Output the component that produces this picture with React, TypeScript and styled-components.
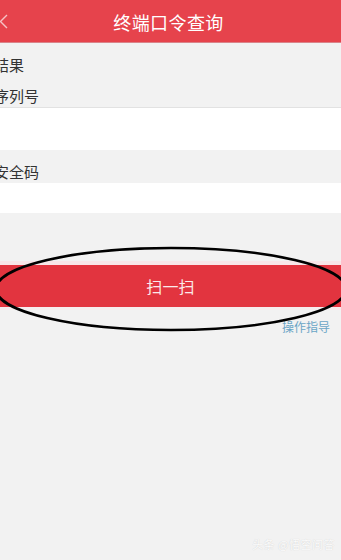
import React from "react";
import styled, { createGlobalStyle } from "styled-components";

const Global = createGlobalStyle`
  html, body { margin: 0; padding: 0; background: #f2f2f2; }
  body { font-family: "Noto Sans CJK SC", "Noto Sans", sans-serif; }
  * { box-sizing: border-box; }
`;

const Page = styled.div`
  position: relative;
  width: 341px;
  height: 560px;
  overflow: hidden;
  background: #f2f2f2;
`;

const Header = styled.div`
  height: 43px;
  background: #e6434c;
  display: flex;
  align-items: center;
  justify-content: center;
  position: relative;
  border-bottom: 1px solid #d9848a;
`;

const Title = styled.div`
  color: #fff;
  font-size: 18px;
  line-height: 20px;
  letter-spacing: 0.4px;
  margin-left: -4px;
  margin-top: 1px;
`;

const Back = styled.svg`
  position: absolute;
  left: 0;
  top: 14px;
`;

const Label = styled.div<{ $top: number; $bottom?: number }>`
  font-size: 15px;
  line-height: 20px;
  color: #333;
  margin-left: -6px;
  padding-top: ${(p) => p.$top}px;
  padding-bottom: ${(p) => p.$bottom ?? 0}px;
`;

const Divider = styled.div`
  height: 1px;
  background: #e2e2e2;
`;

const Input = styled.div<{ $h: number }>`
  height: ${(p) => p.$h}px;
  background: #fff;
`;

const Button = styled.div`
  margin-top: 52px;
  height: 42px;
  background: #e2343f;
  color: #fbe9ea;
  font-size: 16px;
  display: flex;
  align-items: center;
  justify-content: center;
  box-shadow: 0 -4px 0 #f8e6e8, 0 3px 0 #f6eced;
  letter-spacing: 0.2px;
`;

const Link = styled.div`
  margin-top: 13px;
  padding-right: 11px;
  text-align: right;
  font-size: 12px;
  line-height: 14px;
  color: #6aa5c6;
`;

const Ellipse = styled.svg`
  position: absolute;
  left: 0;
  top: 240px;
  overflow: visible;
  pointer-events: none;
`;

const Watermark = styled.div`
  position: absolute;
  right: 6px;
  bottom: 8px;
  font-size: 11px;
  color: rgba(255, 255, 255, 0.95);
  text-shadow: 0 0 1px rgba(0, 0, 0, 0.18);
  letter-spacing: 0.5px;
`;

export default function App() {
  return (
    <>
      <Global />
      <Page>
        <Header>
          <Back width="10" height="16" viewBox="0 0 10 16">
            <path d="M7 1 L0.5 7.5 L7 14" fill="none" stroke="#f6c2c5" strokeWidth="1.4" />
          </Back>
          <Title>终端口令查询</Title>
        </Header>
        <Label $top={12}>结果</Label>
        <Label $top={11} $bottom={1}>序列号</Label>
        <Divider />
        <Input $h={42} />
        <Label $top={12} $bottom={1}>安全码</Label>
        <Input $h={30} />
        <Button>扫一扫</Button>
        <Link>操作指导</Link>
        <Ellipse width="341" height="100" viewBox="0 0 341 100">
          <ellipse cx="171" cy="49" rx="175" ry="41" fill="none" stroke="#000" strokeWidth="2.6" />
        </Ellipse>
        <Watermark>头条 @悟空问答</Watermark>
      </Page>
    </>
  );
}
